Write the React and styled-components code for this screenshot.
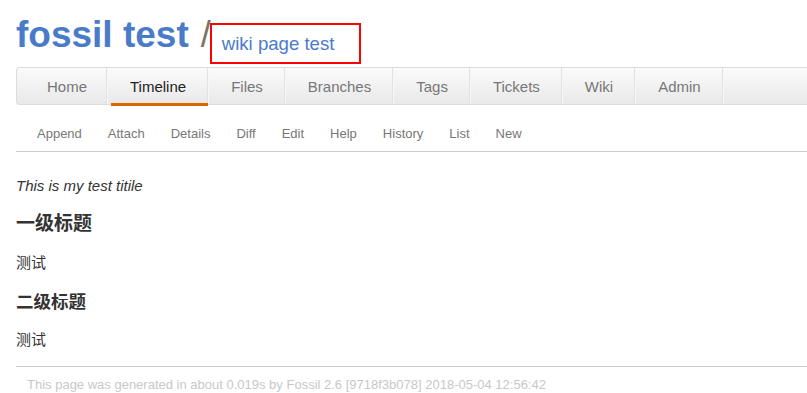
import React from "react";
import styled, { createGlobalStyle } from "styled-components";

const GlobalStyle = createGlobalStyle`
  html, body {
    margin: 0;
    padding: 0;
    overflow: hidden;
    background: #fff;
  }
  body {
    font-family: "Liberation Sans", "Noto Sans CJK SC", sans-serif;
    color: #333;
  }
`;

const mainTabs = ["Home", "Timeline", "Files", "Branches", "Tags", "Tickets", "Wiki", "Admin"];
const subItems = ["Append", "Attach", "Details", "Diff", "Edit", "Help", "History", "List", "New"];

export default function App() {
  return (
    <>
      <GlobalStyle />
      <Page>
        <Header>
          <Title>fossil test</Title>
          <Slash>/</Slash>
          <PageName>wiki page test</PageName>
        </Header>

        <MainMenu>
          {mainTabs.map((t) => (
            <Tab key={t} $active={t === "Timeline"}>
              {t}
            </Tab>
          ))}
        </MainMenu>

        <SubMenu>
          {subItems.map((s) => (
            <SubLink key={s}>{s}</SubLink>
          ))}
        </SubMenu>

        <Content>
          <Lead>This is my test titile</Lead>
          <H1>一级标题</H1>
          <Para>测试</Para>
          <H2>二级标题</H2>
          <Para>测试</Para>
        </Content>

        <Footer>
          This page was generated in about 0.019s by Fossil 2.6 [9718f3b078] 2018-05-04 12:56:42
        </Footer>
      </Page>
    </>
  );
}

const Page = styled.div`
  width: 900px;
  padding-left: 16px;
`;

const Header = styled.div`
  display: flex;
  align-items: flex-start;
  padding-top: 15px;
  height: 49px;
`;

const Title = styled.span`
  font-size: 37px;
  line-height: 40px;
  font-weight: bold;
  color: #4a7bc9;
`;

const Slash = styled.span`
  font-size: 36px;
  line-height: 40px;
  color: #7a7468;
  margin-left: 12px;
`;

const PageName = styled.div`
  margin-top: 8px;
  margin-left: -1px;
  border: 2px solid #f00;
  padding: 0 25px 0 10px;
  line-height: 37px;
  font-size: 18.6px;
  color: #4a7bd0;
`;

const MainMenu = styled.nav`
  display: flex;
  margin-top: 3px;
  height: 36px;
  padding-left: 7px;
  border: 1px solid #dcdcdc;
  border-right: none;
  border-radius: 4px 0 0 4px;
  background: linear-gradient(to bottom, #fbfbfb 0%, #e9e9e9 100%);
`;

const Tab = styled.a`
  position: relative;
  display: block;
  padding: 1px 21px 0 23px;
  line-height: 35px;
  font-size: 15px;
  color: ${(p) => (p.$active ? "#222" : "#777")};
  border-right: 1px solid #e2e2e2;
  box-shadow: 1px 0 0 #f7f7f7;
  cursor: pointer;

  &:first-child {
    padding-right: 19px;
  }

  ${(p) =>
    p.$active &&
    `
    &::after {
      content: "";
      position: absolute;
      left: 4px;
      right: -1px;
      bottom: -2px;
      height: 3px;
      background: #dd6600;
    }
  `}
`;

const SubMenu = styled.div`
  display: flex;
  padding: 19px 0 7px 8px;
  border-bottom: 1px solid #ccc;
`;

const SubLink = styled.a`
  padding: 0 13px;
  font-size: 13px;
  line-height: 20px;
  color: #777;
  cursor: pointer;
`;

const Content = styled.div`
  display: flex;
  flex-direction: column;
  padding-bottom: 16px;
  border-bottom: 1px solid #ccc;
`;

const Lead = styled.p`
  margin: 24px 0 0;
  font-size: 15px;
  line-height: 20px;
  font-style: italic;
  color: #333;
`;

const H1 = styled.h1`
  margin: 16px 0 17px;
  font-size: 19px;
  line-height: 24px;
  font-weight: bold;
  color: #333;
`;

const H2 = styled.h2`
  margin: 18px 0 17px;
  font-size: 17.5px;
  line-height: 22px;
  font-weight: bold;
  color: #333;
`;

const Para = styled.p`
  margin: 0;
  font-size: 15px;
  line-height: 20px;
  color: #333;
`;

const Footer = styled.div`
  padding: 10px 0 0 11px;
  font-size: 13px;
  line-height: 16px;
  color: #c8c8c8;
`;
